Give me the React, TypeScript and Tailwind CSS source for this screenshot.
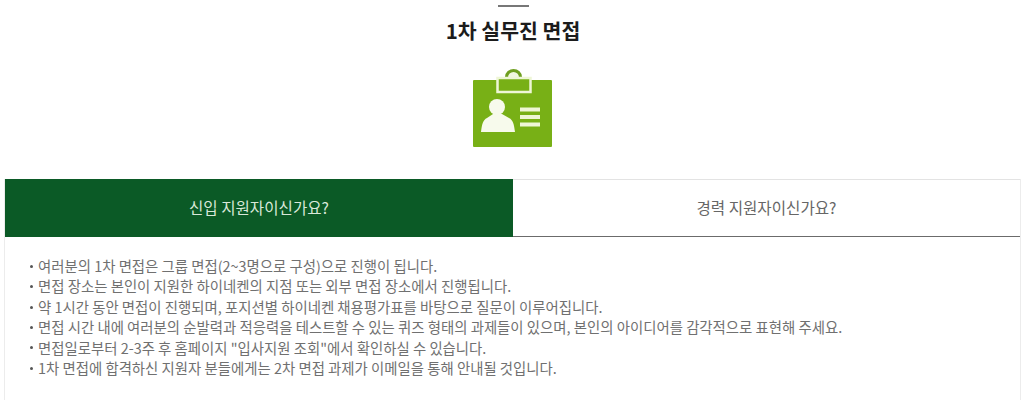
const notes = [
  '여러분의 1차 면접은 그룹 면접(2~3명으로 구성)으로 진행이 됩니다.',
  '면접 장소는 본인이 지원한 하이네켄의 지점 또는 외부 면접 장소에서 진행됩니다.',
  '약 1시간 동안 면접이 진행되며, 포지션별 하이네켄 채용평가표를 바탕으로 질문이 이루어집니다.',
  '면접 시간 내에 여러분의 순발력과 적응력을 테스트할 수 있는 퀴즈 형태의 과제들이 있으며, 본인의 아이디어를 감각적으로 표현해 주세요.',
  '면접일로부터 2-3주 후 홈페이지 "입사지원 조회"에서 확인하실 수 있습니다.',
  '1차 면접에 합격하신 지원자 분들에게는 2차 면접 과제가 이메일을 통해 안내될 것입니다.',
];

const BadgeIcon = () => (
  <svg width="80" height="80" viewBox="0 0 80 80" className="block">
    <rect x="0" y="12" width="79" height="67" rx="1" fill="#78b016" />
    <path d="M32 10 V9 a8.500 8 0 0 1 17 0 V10 Z" fill="#6f9f20" />
    <path d="M35 10 V9.500 a5.500 5.500 0 0 1 11 0 V10 Z" fill="#f1f7df" />
    <rect x="24.500" y="10" width="33" height="14" fill="#78b016" stroke="#eef6d6" strokeWidth="2.500" />
    <circle cx="24" cy="39" r="8" fill="#f7faec" />
    <path d="M8 64 C9 56 10 52 14 50 L20 46 H29 L36 50 C40 52 41 56 42 64 Z" fill="#f7faec" />
    <rect x="47" y="39.500" width="20" height="4" fill="#eef6d6" />
    <rect x="47" y="47" width="20" height="4" fill="#eef6d6" />
    <rect x="47" y="54.500" width="20" height="4" fill="#eef6d6" />
  </svg>
);

export default function App() {
  return (
    <div className="w-[1028px] h-[400px] overflow-hidden bg-white pl-[4px] pt-[5px] font-['Noto_Sans_CJK_KR','Noto_Sans',sans-serif]">
      <div className="flex w-[1018px] flex-col items-center">
        <div className="h-[2px] w-[31px] bg-[#777777]" />
        <h2 className="mt-[9px] text-[20.500px] leading-[28px] font-bold text-[#1c1c1c]">1차 실무진 면접</h2>
        <div className="mt-[24px]">
          <BadgeIcon />
        </div>
      </div>
      <div className="mt-[31px] h-[240px] w-[1017px] border-x border-[#ececec]">
        <div className="flex h-[58px] text-[15.600px]">
          <div className="flex w-[508px] items-center justify-center bg-[#0b5a26] text-[#d9e8d9]">신입 지원자이신가요?</div>
          <div className="flex flex-1 items-center justify-center border-t border-b border-t-[#e3e3e3] border-b-[#6b6b6b] text-[#666666]">경력 지원자이신가요?</div>
        </div>
        <ul className="pt-[19px] pl-[25px] text-[14.400px] leading-[20.400px] text-[#707070]">
          {notes.map((note) => (
            <li key={note} className="flex items-center gap-[5px] whitespace-nowrap">
              <span className="size-[3px] rounded-full bg-[#555555]" />
              <span>{note}</span>
            </li>
          ))}
        </ul>
      </div>
    </div>
  );
}
